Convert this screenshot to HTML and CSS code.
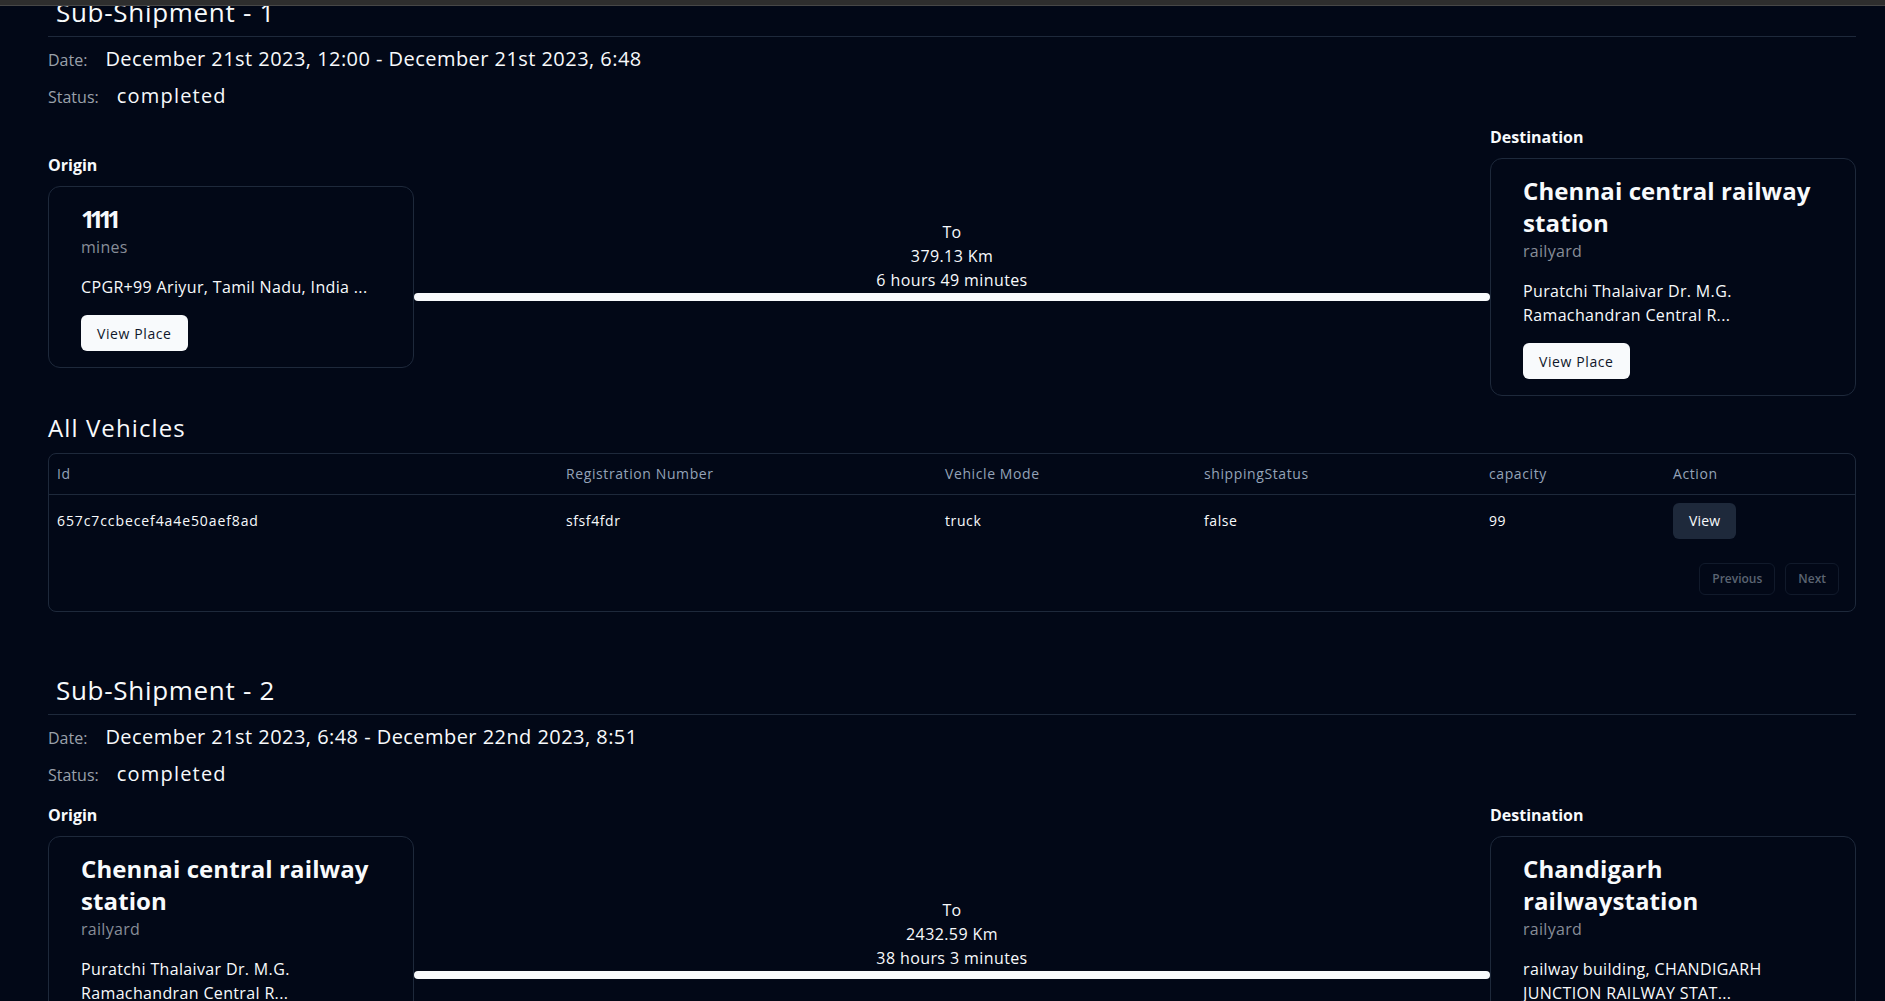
FILE: index.html
```html
<!DOCTYPE html>
<html lang="en">
<head>
<meta charset="utf-8">
<title>Shipment</title>
<link rel="stylesheet" href="styles.css">
</head>
<body>
<div class="topbar"></div>
<main class="page">
  <section class="sub">
    <h2 class="sub-title">Sub-Shipment - 1</h2>
    <div class="meta">
      <div class="meta-row"><span class="meta-label">Date:</span><span class="meta-value meta-date">December 21st 2023, 12:00 - December 21st 2023, 6:48</span></div>
      <div class="meta-row"><span class="meta-label">Status:</span><span class="meta-value meta-status">completed</span></div>
    </div>
    <div class="route">
      <div class="place-col">
        <div class="place-label">Origin</div>
        <div class="card">
          <div class="place-name place-name--num">1111</div>
          <div class="place-type">mines</div>
          <div class="place-addr">CPGR+99 Ariyur, Tamil Nadu, India ...</div>
          <button class="btn btn-primary">View Place</button>
        </div>
      </div>
      <div class="route-mid">
        <div class="route-info">
          <div>To</div>
          <div>379.13 Km</div>
          <div>6 hours 49 minutes</div>
        </div>
        <div class="route-line"></div>
      </div>
      <div class="place-col">
        <div class="place-label">Destination</div>
        <div class="card">
          <div class="place-name">Chennai central railway station</div>
          <div class="place-type">railyard</div>
          <div class="place-addr">Puratchi Thalaivar Dr. M.G. Ramachandran Central R...</div>
          <button class="btn btn-primary">View Place</button>
        </div>
      </div>
    </div>
    <h3 class="vehicles-title">All Vehicles</h3>
    <div class="table-wrap">
      <table class="vtable">
        <colgroup>
          <col class="c-id"><col class="c-reg"><col class="c-mode"><col class="c-ship"><col class="c-cap"><col class="c-act">
        </colgroup>
        <thead>
          <tr><th>Id</th><th>Registration Number</th><th>Vehicle Mode</th><th>shippingStatus</th><th>capacity</th><th>Action</th></tr>
        </thead>
        <tbody>
          <tr><td class="cell-id">657c7ccbecef4a4e50aef8ad</td><td>sfsf4fdr</td><td>truck</td><td>false</td><td>99</td><td><button class="btn btn-secondary">View</button></td></tr>
        </tbody>
      </table>
      <div class="pager">
        <button class="btn btn-outline" disabled>Previous</button>
        <button class="btn btn-outline" disabled>Next</button>
      </div>
    </div>
  </section>

  <section class="sub">
    <h2 class="sub-title">Sub-Shipment - 2</h2>
    <div class="meta">
      <div class="meta-row"><span class="meta-label">Date:</span><span class="meta-value meta-date">December 21st 2023, 6:48 - December 22nd 2023, 8:51</span></div>
      <div class="meta-row"><span class="meta-label">Status:</span><span class="meta-value meta-status">completed</span></div>
    </div>
    <div class="route">
      <div class="place-col">
        <div class="place-label">Origin</div>
        <div class="card">
          <div class="place-name">Chennai central railway station</div>
          <div class="place-type">railyard</div>
          <div class="place-addr">Puratchi Thalaivar Dr. M.G. Ramachandran Central R...</div>
          <button class="btn btn-primary">View Place</button>
        </div>
      </div>
      <div class="route-mid">
        <div class="route-info">
          <div>To</div>
          <div>2432.59 Km</div>
          <div>38 hours 3 minutes</div>
        </div>
        <div class="route-line"></div>
      </div>
      <div class="place-col">
        <div class="place-label">Destination</div>
        <div class="card">
          <div class="place-name">Chandigarh railwaystation</div>
          <div class="place-type">railyard</div>
          <div class="place-addr">railway building, CHANDIGARH JUNCTION RAILWAY STAT...</div>
          <button class="btn btn-primary">View Place</button>
        </div>
      </div>
    </div>
  </section>
</main>
</body>
</html>
```

FILE: styles.css
```css
* { box-sizing: border-box; }
html, body {
  margin: 0;
  padding: 0;
  overflow: hidden;
  background: #020817;
}
body {
  font-family: "Open Sans", "Noto Sans", sans-serif;
  color: #f8fafc;
  font-size: 16px;
  line-height: 24px;
}
.topbar {
  position: fixed;
  top: 0;
  left: 0;
  right: 0;
  height: 6px;
  background: #2e2e2e;
  border-bottom: 1px solid #474747;
  z-index: 10;
}
.page {
  margin-top: -4px;
  padding: 0 29px 0 48px;
}
.sub { margin-bottom: 62px; }
.sub-title {
  margin: 0;
  padding: 0 8px 8px;
  font-size: 26px;
  line-height: 32px;
  font-weight: 500;
  letter-spacing: 0.7px;
  border-bottom: 1px solid #1e293b;
}
.meta {
  margin-top: 8px;
  display: flex;
  flex-direction: column;
  gap: 9px;
}
.meta-row {
  display: flex;
  align-items: baseline;
  gap: 18px;
  height: 28px;
}
.meta-label {
  font-size: 16px;
  line-height: 27px;
  color: #9aa0aa;
}
.meta-value {
  font-size: 20px;
  line-height: 28px;
  font-weight: 500;
}
.meta-date { letter-spacing: 0.45px; }
.meta-status { letter-spacing: 1.2px; }
.route {
  margin-top: 15px;
  display: flex;
  align-items: center;
}
.place-col {
  width: 366px;
  flex: none;
}
.place-label {
  font-weight: 700;
  font-size: 16px;
  line-height: 24px;
  margin-bottom: 9px;
}
.card {
  border: 1px solid #1e293b;
  border-radius: 12px;
  padding: 16px 32px;
  background: #020817;
}
.place-name {
  font-size: 24px;
  line-height: 32px;
  font-weight: 700;
  letter-spacing: 0.1px;
}
.place-name--num { letter-spacing: -5px; }
.place-type {
  color: #878d98;
  font-size: 16px;
  line-height: 24px;
  letter-spacing: 0.3px;
}
.place-addr {
  margin-top: 16px;
  font-size: 16px;
  line-height: 24px;
  letter-spacing: 0.35px;
}
.btn {
  font-family: inherit;
  font-size: 14px;
  font-weight: 500;
  height: 36px;
  padding: 0 16px;
  border-radius: 6px;
  border: none;
  display: inline-flex;
  align-items: center;
  justify-content: center;
  cursor: pointer;
}
.btn-primary {
  background: #f8fafc;
  color: #0f172a;
  margin-top: 16px;
  letter-spacing: 0.6px;
}
.btn-secondary {
  background: #1e293b;
  color: #f8fafc;
  letter-spacing: 0.2px;
}
.btn-outline {
  height: 32px;
  padding: 0 12px;
  font-size: 12px;
  font-weight: 600;
  background: transparent;
  color: #5b6472;
  border: 1px solid #111a2b;
}
.route-mid {
  flex: 1;
  display: flex;
  flex-direction: column;
  align-items: stretch;
}
.route-info {
  text-align: center;
  font-size: 16px;
  line-height: 24px;
  letter-spacing: 0.4px;
}
.route-line {
  height: 8px;
  margin-top: 1px;
  background: #f8fafc;
  border-radius: 999px;
}
.vehicles-title {
  margin: 16px 0 9px;
  font-size: 24px;
  line-height: 32px;
  font-weight: 500;
  letter-spacing: 1.1px;
}
.table-wrap {
  border: 1px solid #1e293b;
  border-radius: 8px;
}
.vtable {
  width: 100%;
  border-collapse: collapse;
  table-layout: fixed;
  font-size: 14px;
  letter-spacing: 0.6px;
}
.c-id { width: 509px; }
.c-reg { width: 379px; }
.c-mode { width: 259px; }
.c-ship { width: 285px; }
.c-cap { width: 184px; }
.c-act { width: 190px; }
.vtable th {
  height: 40px;
  padding: 0 8px;
  text-align: left;
  font-weight: 500;
  color: #94a3b8;
  border-bottom: 1px solid #1e293b;
}
.vtable td {
  padding: 8px;
  height: 52px;
  vertical-align: middle;
}
.vtable .cell-id { letter-spacing: 0.9px; }
.pager {
  display: flex;
  justify-content: flex-end;
  gap: 10px;
  padding: 16px;
}
```
